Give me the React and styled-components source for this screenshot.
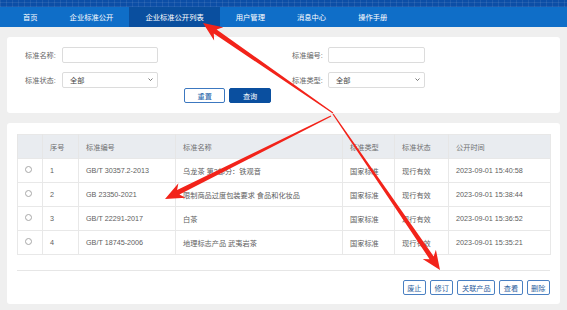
import React from "react";
import styled, { createGlobalStyle } from "styled-components";

const GlobalStyle = createGlobalStyle`
  body {
    margin: 0;
    background: #efefef;
    font-family: "Liberation Sans", "Noto Sans CJK SC", sans-serif;
  }
`;

const rows = [
  { no: 1, code: "GB/T 30357.2-2013", name: "乌龙茶 第2部分：铁观音", type: "国家标准", status: "现行有效", time: "2023-09-01 15:40:58" },
  { no: 2, code: "GB 23350-2021", name: "限制商品过度包装要求 食品和化妆品", type: "国家标准", status: "现行有效", time: "2023-09-01 15:38:44" },
  { no: 3, code: "GB/T 22291-2017", name: "白茶", type: "国家标准", status: "现行有效", time: "2023-09-01 15:36:52" },
  { no: 4, code: "GB/T 18745-2006", name: "地理标志产品 武夷岩茶", type: "国家标准", status: "现行有效", time: "2023-09-01 15:35:21" },
];

const columns = [
  { key: "radio", label: "", width: 25 },
  { key: "no", label: "序号", width: 36 },
  { key: "code", label: "标准编号", width: 97 },
  { key: "name", label: "标准名称", width: 167 },
  { key: "type", label: "标准类型", width: 52 },
  { key: "status", label: "标准状态", width: 54 },
  { key: "time", label: "公开时间", width: 102 },
];

const navItems = ["首页", "企业标准公开", "企业标准公开列表", "用户管理", "消息中心", "操作手册"];

// annotation arrows drawn over the screenshot
const arrows = [
  { from: [333, 113], to: [203, 23] },
  { from: [331, 116], to: [165, 199] },
  { from: [333, 114], to: [440, 270] },
];

function arrowPoints({ from, to }) {
  const [sx, sy] = from;
  const [tx, ty] = to;
  const len = Math.hypot(tx - sx, ty - sy);
  const ux = (tx - sx) / len;
  const uy = (ty - sy) / len;
  const nx = -uy;
  const ny = ux;
  const w0 = 1.2, w1 = 5, L = 19, H = 8;
  const p = (d, o) => [tx - ux * d + nx * o, ty - uy * d + ny * o];
  const pts = [
    [sx + nx * w0 / 2, sy + ny * w0 / 2],
    p(L * 0.78, w1 / 2),
    p(L, H),
    [tx, ty],
    p(L, -H),
    p(L * 0.78, -w1 / 2),
    [sx - nx * w0 / 2, sy - ny * w0 / 2],
  ];
  return pts.map(([x, y]) => `${x.toFixed(1)},${y.toFixed(1)}`).join(" ");
}

export default function App() {
  return (
    <Page>
      <GlobalStyle />
      <Header>
        <TopStrip />
        <NavBar>
          {navItems.map((item, i) => (
            <NavItem key={item} $active={i === 2}>
              {item}
            </NavItem>
          ))}
        </NavBar>
      </Header>

      <Main>
        <SearchPanel>
          <FormGrid>
            <Label>标准名称:</Label>
            <Input />
            <span />
            <Label>标准编号:</Label>
            <Input />

            <Label>标准状态:</Label>
            <Select>
              全部
              <Chevron viewBox="0 0 10 6">
                <path d="M1 1l4 4 4-4" fill="none" stroke="#444" strokeWidth="1.4" />
              </Chevron>
            </Select>
            <span />
            <Label>标准类型:</Label>
            <Select>
              全部
              <Chevron viewBox="0 0 10 6">
                <path d="M1 1l4 4 4-4" fill="none" stroke="#444" strokeWidth="1.4" />
              </Chevron>
            </Select>
          </FormGrid>
          <SearchActions>
            <SearchButton>重置</SearchButton>
            <SearchButton $primary>查询</SearchButton>
          </SearchActions>
        </SearchPanel>

        <TablePanel>
          <Table>
            <colgroup>
              {columns.map((c) => (
                <col key={c.key} style={{ width: c.width }} />
              ))}
            </colgroup>
            <thead>
              <tr>
                {columns.map((c) => (
                  <Th key={c.key}>{c.label}</Th>
                ))}
              </tr>
            </thead>
            <tbody>
              {rows.map((r) => (
                <tr key={r.no}>
                  <Td $center>
                    <Radio />
                  </Td>
                  <Td>{r.no}</Td>
                  <Td>{r.code}</Td>
                  <Td>{r.name}</Td>
                  <Td>{r.type}</Td>
                  <Td>{r.status}</Td>
                  <Td>{r.time}</Td>
                </tr>
              ))}
            </tbody>
          </Table>
          <Divider />
          <TableActions>
            {["废止", "修订", "关联产品", "查看", "删除"].map((b) => (
              <ActionButton key={b}>{b}</ActionButton>
            ))}
          </TableActions>
        </TablePanel>
      </Main>

      <Overlay width="567" height="310" viewBox="0 0 567 310">
        {arrows.map((a, i) => (
          <polygon key={i} points={arrowPoints(a)} fill="#f2231a" />
        ))}
      </Overlay>
    </Page>
  );
}

const Page = styled.div`
  position: relative;
  width: 567px;
  height: 310px;
  overflow: hidden;
  background: #efefef;
`;

const Header = styled.header`
  display: flex;
  flex-direction: column;
`;

const TopStrip = styled.div`
  height: 7px;
  background-color: #0c4ea6;
  background-image: repeating-linear-gradient(90deg, rgba(255, 255, 255, 0.08) 0 1px, transparent 1px 6px),
    repeating-linear-gradient(0deg, rgba(255, 255, 255, 0.08) 0 1px, transparent 1px 4px);
`;

const NavBar = styled.nav`
  height: 20px;
  display: flex;
  padding-left: 7px;
  background: #0f6ec8;
`;

const NavItem = styled.div`
  display: flex;
  align-items: center;
  padding: 0 16px;
  font-size: 7.3px;
  color: #fff;
  background: ${(p) => (p.$active ? "#0a4f9f" : "transparent")};
`;

const Main = styled.main`
  display: flex;
  flex-direction: column;
  gap: 10px;
  padding: 10px 7px 0;
`;

const SearchPanel = styled.section`
  background: #fff;
  border-radius: 3px;
  padding: 10px 18px 10px;
  height: 76px;
  box-sizing: border-box;
`;

const FormGrid = styled.div`
  display: grid;
  grid-template-columns: 37px 96px 134px 36px 97px;
  grid-template-rows: 16px 15px;
  row-gap: 9px;
  align-items: center;
`;

const Label = styled.label`
  font-size: 7.2px;
  color: #666;
  white-space: nowrap;
`;

const Input = styled.div`
  height: 16px;
  box-sizing: border-box;
  border: 1px solid #dcdcdc;
  border-radius: 2px;
  background: #fff;
`;

const Select = styled.div`
  height: 16px;
  box-sizing: border-box;
  border: 1px solid #dcdcdc;
  border-radius: 2px;
  background: #fff;
  display: flex;
  align-items: center;
  justify-content: space-between;
  padding: 0 4px 0 7px;
  font-size: 7.2px;
  color: #444;
`;

const Chevron = styled.svg`
  width: 5px;
  height: 3px;
`;

const SearchActions = styled.div`
  display: flex;
  gap: 4px;
  margin: 1px 0 0 159px;
`;

const SearchButton = styled.button`
  height: 15px;
  padding: 0 12.5px;
  border-radius: 2px;
  font-family: inherit;
  font-size: 7.2px;
  border: 1px solid ${(p) => (p.$primary ? "#0a4f9f" : "#3c78c0")};
  background: ${(p) => (p.$primary ? "#0a4f9f" : "#fff")};
  color: ${(p) => (p.$primary ? "#fff" : "#1a5fa8")};
`;

const TablePanel = styled.section`
  background: #fff;
  border-radius: 3px;
  padding: 11px 10px 11px;
  height: 181px;
  box-sizing: border-box;
`;

const Table = styled.table`
  width: 533px;
  border-collapse: collapse;
  table-layout: fixed;
  border: 1px solid #e8e8e8;
`;

const Th = styled.th`
  height: 23px;
  padding: 0 7px;
  background: #e9ecf0;
  border-left: 1px solid #e6e6e6;
  font-size: 7.2px;
  font-weight: normal;
  color: #707070;
  text-align: left;
`;

const Td = styled.td`
  height: 23px;
  padding: 0 7px;
  border: 1px solid #e8e8e8;
  font-size: 7.2px;
  color: #606060;
  white-space: nowrap;
  overflow: hidden;
  text-align: ${(p) => (p.$center ? "center" : "left")};
`;

const Radio = styled.span`
  display: inline-block;
  width: 5px;
  height: 5px;
  border: 1px solid #a8a8a8;
  border-radius: 50%;
  vertical-align: middle;
  margin: -3px 0 0 -3px;
`;

const Divider = styled.div`
  height: 1px;
  background: #e6e6e6;
  margin-top: 15px;
`;

const TableActions = styled.div`
  display: flex;
  justify-content: flex-end;
  gap: 4px;
  margin-top: 9px;
`;

const ActionButton = styled.button`
  height: 15px;
  padding: 0 3.5px;
  border: 1px solid #4a80c2;
  border-radius: 2px;
  background: #fff;
  color: #2c5d9c;
  font-family: inherit;
  font-size: 7.2px;
`;

const Overlay = styled.svg`
  position: absolute;
  left: 0;
  top: 0;
  pointer-events: none;
`;
